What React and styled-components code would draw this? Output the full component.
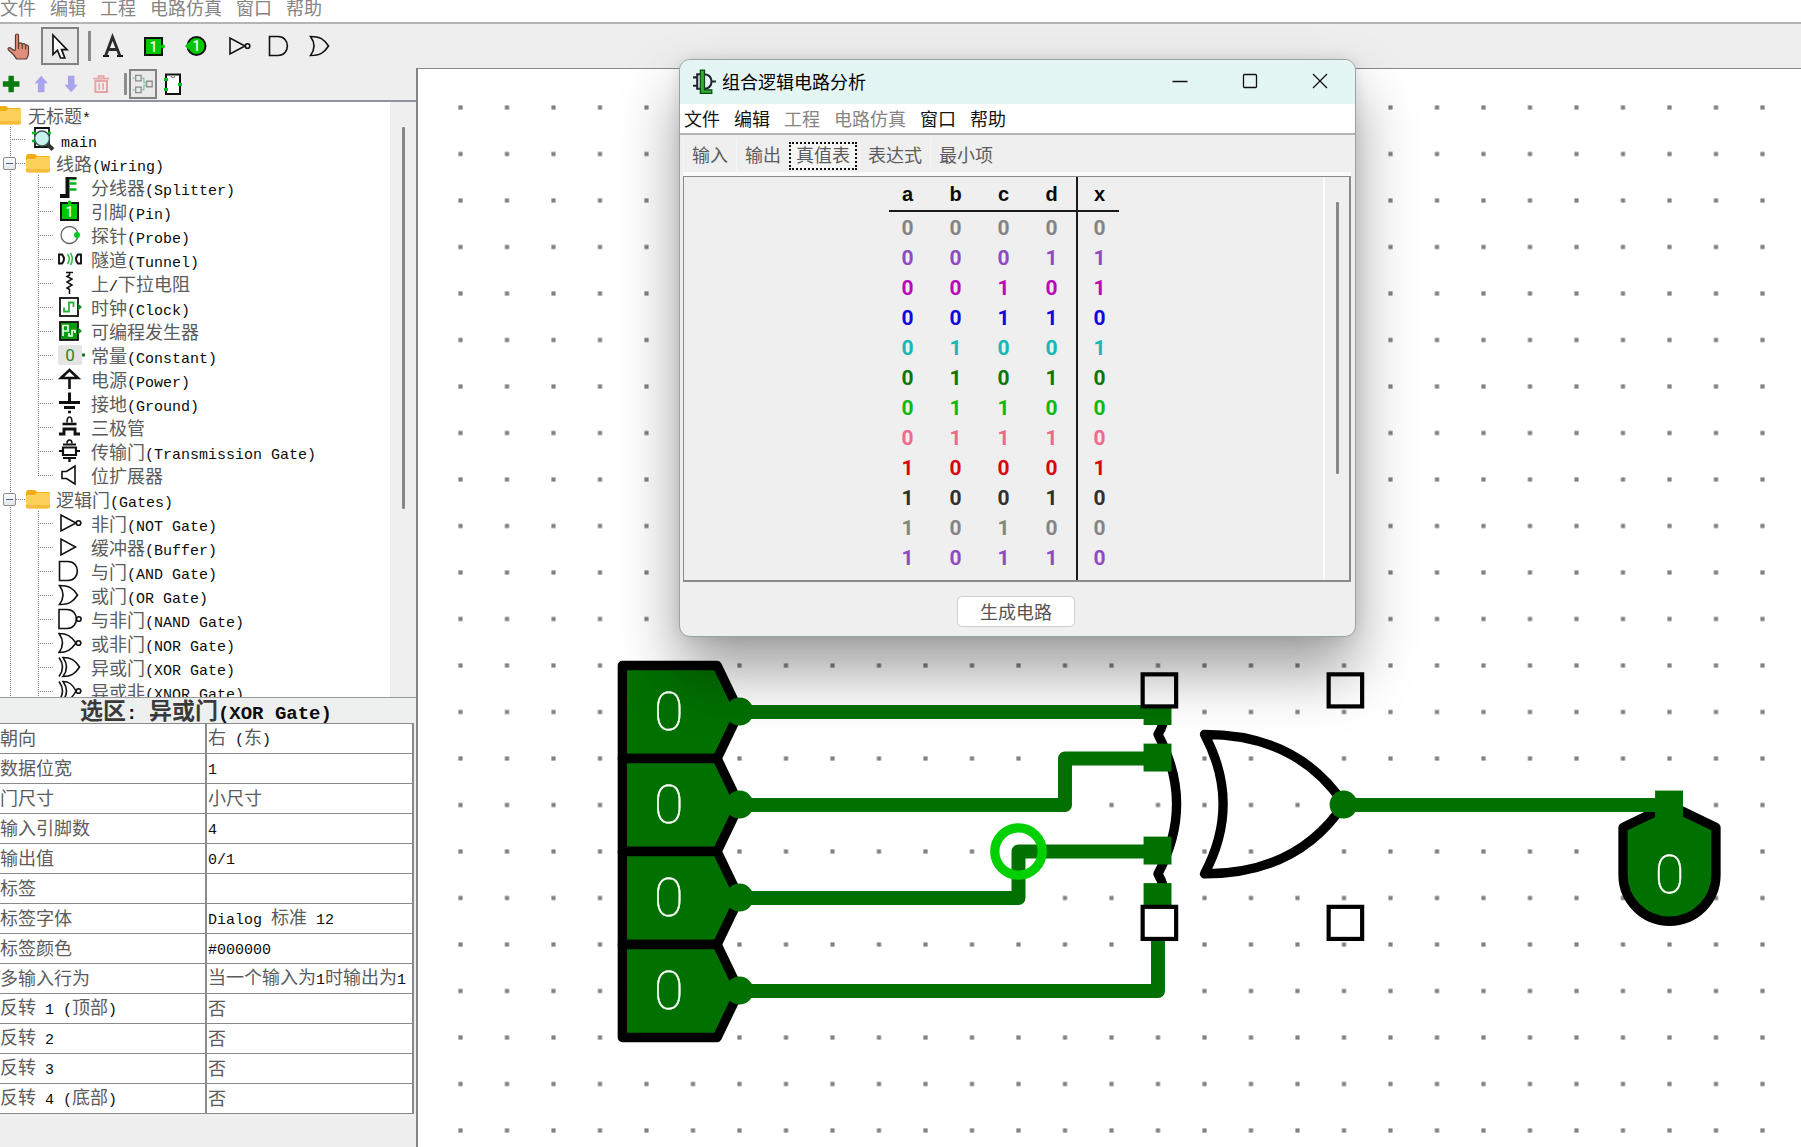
import React from "react";
import styled, { createGlobalStyle, css } from "styled-components";

const SANS = `"Noto Sans CJK SC", "Noto Sans", sans-serif`;
const MONO = `"Liberation Mono", "Noto Sans CJK SC", monospace`;

const GlobalStyle = createGlobalStyle`
  * { box-sizing: border-box; }
  html, body, #root { height: 100%; }
  body {
    margin: 0;
    overflow: hidden;
    background: #eeeeee;
    color: #5c5c5c;
    font: 18px/24px ${SANS};
  }
  button {
    padding: 0;
    border: 0;
    background: none;
    color: inherit;
    font: inherit;
  }
  svg { display: block; }
`;

/* ---------- shared parts ---------- */

const Latin = styled.span`
  font-family: ${MONO};
  font-size: ${(p) => (p.$large ? 19 : 15)}px;
  line-height: 1;
  color: #0c0c0c;
`;

function Mixed({ text, large }) {
  return text
    .split(/([\x20-\x7e]+)/)
    .filter(Boolean)
    .map((part, i) =>
      /^[\x20-\x7e]+$/.test(part) ? (
        <Latin key={i} $large={large}>{part}</Latin>
      ) : (
        <React.Fragment key={i}>{part}</React.Fragment>
      )
    );
}

const MenuBar = styled.nav`
  display: flex;
  gap: 14px;
  flex: none;
  background: #fff;
  border-bottom: 2px solid #b4b4b4;
  ${(p) =>
    p.$inDialog
      ? css`height: 31px; padding: 0 4px; line-height: 28px;`
      : css`height: 24px; padding: 0; line-height: 15px;`}
`;

const MenuItem = styled.button`
  line-height: inherit;
  height: ${(p) => (p.$tall ? 28 : 15)}px;
  white-space: nowrap;
  color: ${(p) => (p.$dark ? "#141414" : "#858585")};
`;

/* ---------- page frame ---------- */

const Page = styled.div`
  position: relative;
  display: flex;
  flex-direction: column;
  height: 100vh;
`;

const Toolbar = styled.div`
  display: flex;
  align-items: center;
  flex: none;
  gap: ${(p) => (p.$small ? 0 : 3)}px;
  height: ${(p) => (p.$small ? 34 : 44)}px;
  ${(p) => p.$small && css`border-bottom: 2px solid #8f939b;`}
`;

const ToolGroup = styled.div`
  display: flex;
  gap: ${(p) => p.$gap}px;
  margin-left: ${(p) => (p.$lead ? 3 : 0)}px;
`;

const ToolButton = styled.button`
  display: flex;
  align-items: center;
  justify-content: center;
  width: ${(p) => p.$w}px;
  height: ${(p) => p.$h}px;
  border: ${(p) => (p.$on ? "2px solid #828282" : "0")};
  background: ${(p) => (p.$on ? "#e9e9e9" : "none")};
`;

const Divider = styled.span`
  width: 3px;
  height: ${(p) => (p.$small ? 22 : 30)}px;
  margin: ${(p) => (p.$small ? "0 2px 0 10px" : "0 0 0 6px")};
  background: #8c8c8c;
`;

const Main = styled.div`
  display: flex;
  flex: 1;
  min-height: 0;
`;

const Sidebar = styled.aside`
  display: grid;
  grid-template-rows: 34px minmax(0, 595fr) minmax(0, 450fr);
  flex: none;
  width: 416px;
`;

const Canvas = styled.main`
  flex: 1;
  min-width: 0;
  background: #fff;
  border-top: 1px solid #8a8a8a;
  border-left: 2px solid #848484;
`;

/* ---------- component tree ---------- */

const TreePane = styled.div`
  display: flex;
  min-height: 0;
  overflow: hidden;
`;

const Tree = styled.ul`
  flex: 1;
  margin: 0;
  padding: 1px 0 0;
  list-style: none;
  background: #fff;
`;

const TreeRow = styled.li`
  display: flex;
  align-items: center;
  height: 24px;
  white-space: nowrap;
`;

const dots = (dir) =>
  `repeating-linear-gradient(${dir}, #808080 0 1px, transparent 1px 2px)`;

const Rail = styled.span`
  display: flex;
  align-items: center;
  flex: none;
  width: 26px;
  height: 24px;
  padding-left: 3px;
  margin-left: ${(p) => (p.$inner ? 2 : 0)}px;
  background-image: ${dots("to bottom")}, ${dots("to right")};
  background-repeat: no-repeat;
  background-position: 10px 0, 10px 12px;
  background-size: 1px ${(p) => (p.$end ? "12px" : "100%")}, ${(p) =>
    p.$dash ? "16px 1px" : "0 0"};
`;

const Toggle = styled.button`
  display: flex;
  align-items: center;
  justify-content: center;
  width: 13px;
  height: 13px;
  border: 1px solid #8d8d8d;
  border-radius: 2px;
  background: linear-gradient(#fff, #e6e6e6);
  &::before {
    content: "";
    width: 7px;
    height: 1px;
    background: #4a5fa0;
  }
`;

const IconSlot = styled.span`
  flex: none;
  margin: ${(p) =>
    p.$kind === "item" ? "0 9px 0 4px" : p.$kind === "circuit" ? "0 6px 0 5px" : "0 6px 0 0"};
`;

const RootRow = styled(TreeRow)`
  > svg { margin: 0 7px 0 -3px; }
`;

const ScrollTrack = styled.div`
  display: flex;
  flex-direction: column;
  align-items: center;
  flex: none;
  width: ${(p) => p.$w}px;
  padding-top: 25px;
  background: #efefef;
  border-left: ${(p) => (p.$edge ? "2px solid #fafafa" : "0")};
`;

const Thumb = styled.span`
  width: 3px;
  height: ${(p) => p.$size};
  border-radius: 1px;
  background: #888;
`;

/* ---------- property table ---------- */

const Properties = styled.section`
  min-height: 0;
  overflow: hidden;
`;

const PropHeading = styled.h2`
  margin: 0;
  height: 26px;
  border-top: 1px solid #9a9a9a;
  background: #eef0ef;
  text-align: center;
  font-size: 23px;
  line-height: 22px;
  font-weight: 700;
  color: #3a3a3a;
  padding-right: 4px;
`;

const PropTable = styled.table`
  width: calc(100% - 2px);
  border-collapse: collapse;
  table-layout: fixed;
  background: #fff;
`;

const PropRow = styled.tr`
  height: 30px;
`;

const propCell = css`
  padding: 0 0 3px 1px;
  border: 1px solid #8a8a8a;
  border-width: 1px 2px 1px 0;
  text-align: left;
  vertical-align: middle;
  font-weight: 400;
  line-height: 20px;
  white-space: nowrap;
`;
const PropName = styled.th`
  ${propCell}
  width: 206px;
  padding-left: 0;
`;
const PropValue = styled.td`${propCell}`;

/* ---------- analysis dialog ---------- */

const Dialog = styled.section`
  position: absolute;
  left: 679px;
  top: 59px;
  display: flex;
  flex-direction: column;
  width: 677px;
  height: 578px;
  overflow: hidden;
  border: 1px solid #9aa3a3;
  border-radius: 11px;
  background: #efefef;
  box-shadow: 0 34px 60px rgba(0, 0, 0, 0.38), 0 0 14px rgba(0, 0, 0, 0.1);
`;

const TitleBar = styled.header`
  display: flex;
  align-items: center;
  flex: none;
  height: 44px;
  padding: 0 0 2px 12px;
  background: #e4f6f4;
`;

const Title = styled.h1`
  flex: 1;
  margin: 0 0 0 5px;
  font-size: 18px;
  line-height: 24px;
  font-weight: 400;
  color: #000;
`;

const WindowButton = styled.button`
  display: flex;
  align-items: center;
  justify-content: center;
  width: 70px;
  height: 42px;
`;

const Tabs = styled.div`
  display: flex;
  flex: none;
  height: 37px;
  padding: 3px 3px 0;
`;

const Tab = styled.button`
  ${(p) =>
    p.$on
      ? css`
          height: 28px;
          margin: 4px 2px 0 0;
          padding: 0 5px 4px;
          border: 2px dotted #111;
          background: #f6f6f6;
          line-height: 20px;
        `
      : css`
          height: 33px;
          padding: 0 8px;
          border-left: 1px solid #f6f6f6;
          line-height: 33px;
        `}
`;

const ResultPane = styled.div`
  display: flex;
  flex: none;
  height: 410px;
  margin: 0 4px 0 3px;
  border-top: 4px solid #fbfbfb;
`;

const ResultFrame = styled.div`
  display: flex;
  flex: 1;
  border: 1px solid #8a8a8a;
  border-right-width: 2px;
  border-bottom-width: 2px;
`;

const Viewport = styled.div`
  display: flex;
  flex: 1;
  justify-content: center;
`;

const TableFrame = styled.div`
  position: relative;
  &::after {
    content: "";
    position: absolute;
    top: 0;
    bottom: 0;
    right: 46px;
    width: 2px;
    background: #1a1a1a;
  }
`;

const TruthTable = styled.table`
  border-collapse: collapse;
  text-align: center;
  font: 700 21px/30px Roboto, "Liberation Sans", sans-serif;
`;

const HeadRow = styled.tr`
  height: 36px;
  background: linear-gradient(#1a1a1a, #1a1a1a) center 33px / calc(100% - 10px) 2px no-repeat;
`;

const VarCell = styled.th`
  width: 48px;
  padding: 0 0 3px;
  color: #0a0a0a;
  font: 700 20px/30px "Liberation Sans", Arial, sans-serif;
`;

const ValueRow = styled.tr`
  height: 30px;
  color: ${(p) => p.$color};
`;

const Bit = styled.td`
  padding: 0;
`;

const DialogFooter = styled.footer`
  display: flex;
  align-items: center;
  justify-content: center;
  flex: 1;
  padding-right: 3px;
`;

const BuildButton = styled.button`
  width: 118px;
  height: 31px;
  margin-top: 4px;
  border: 1px solid #cfcfcf;
  border-radius: 5px;
  background: #fff;
  line-height: 28px;
  color: #555;
`;

/* ---------- icons ---------- */

const Svg = ({ size = 24, children, ...rest }) => (
  <svg width={size} height={size} viewBox="0 0 24 24" fill="none" stroke="#111" strokeWidth="1.6" aria-hidden="true" {...rest}>
    {children}
  </svg>
);

const OneGlyph = ({ x = 12, y = 17, size = 14 }) => (
  <text x={x} y={y} textAnchor="middle" fontFamily="Roboto" fontWeight="500" fontSize={size} fill="#e9ffe9" stroke="none">1</text>
);

const FolderIcon = () => (
  <Svg stroke="none">
    <path d="M0 5.5Q0 3 2 3H8.5Q10 3 11 5H22.500Q24 5 24 7V12H0Z" fill="#f2ad12" />
    <path d="M0 9.500Q0 8 1.500 8H8.500L11 6H22.500Q24 6 24 7.500V19.500Q24 21.500 22 21.500H2Q0 21.500 0 19.500Z" fill="#fdd05c" />
    <path d="M0 18V19.500Q0 21.500 2 21.500H22Q24 21.500 24 19.500V18Z" fill="#f6bd3c" />
  </Svg>
);

const HandIcon = () => (
  <Svg size={28} viewBox="0 0 28 28" stroke="#5a3a34" strokeWidth="1.2" strokeLinejoin="round">
    <path
      d="M10.500 17V3.500Q10.500 2 12 2T13.500 3.500V12Q14 10.800 15.500 10.800T17.200 12.300Q17.800 11.500 19 11.700T20.600 13.300Q21.200 12.600 22.200 13T23.500 14.500V20.500Q23.500 24 21.500 27H11.500Q10 23.500 3.500 18Q2.500 17 3.500 16T6 16.200L9 18.500Q10 18.700 10.500 17Z"
      fill="#e08f7a"
    />
    <path d="M13.500 12V17M17.200 12.500V17M20.600 13.500V17.500" />
  </Svg>
);

const ArrowIcon = () => (
  <Svg size={28} viewBox="0 0 28 28" strokeWidth="1.7">
    <path d="M7 3V22.500L11.400 18.200L14.600 26H18.800L15.600 17.600H21Z" fill="#fff" />
  </Svg>
);

const TextIcon = () => (
  <Svg size={28} viewBox="0 0 28 28">
    <path d="M4 24H10M18 24H24" strokeWidth="2" />
    <path d="M6.500 24L13.500 5L21 24M9 17.500H18.500" strokeWidth="2.800" stroke="#2b2b2b" />
  </Svg>
);

const PinInIcon = ({ size = 24 }) => (
  <Svg size={size}>
    <rect x="3" y="4" width="17" height="17" fill="#00c800" strokeWidth="2" />
    <circle cx="21" cy="12.500" r="2" fill="#00c800" stroke="none" />
    <OneGlyph x={11.500} y={17.500} />
  </Svg>
);

const TreePinIcon = () => (
  <Svg>
    <rect x="3" y="4" width="17" height="17" fill="#00c800" strokeWidth="2" />
    <circle cx="11.500" cy="3.500" r="2" fill="#00c800" stroke="none" />
    <OneGlyph x={11.500} y={17.500} />
  </Svg>
);

const PinOutIcon = () => (
  <Svg>
    <circle cx="13.500" cy="12" r="9" fill="#00c800" strokeWidth="2" />
    <path d="M2 12L6 8V16Z" fill="#00c800" stroke="none" />
    <OneGlyph x={13.500} y={17} />
  </Svg>
);

const NotIcon = () => (
  <Svg>
    <path d="M3 4V20L18 12Z" />
    <circle cx="20.500" cy="12" r="2.300" />
  </Svg>
);
const BufferIcon = () => <Svg><path d="M3 4V20L17.500 12Z" /></Svg>;
const AndIcon = () => <Svg><path d="M1.500 2.500H10C22.500 2.500 22.500 21.500 10 21.500H1.500Z" /></Svg>;
const OrIcon = () => <Svg><path d="M1.500 2.500C11 2.500 15 5 19.500 12C15 19 11 21.500 1.500 21.500Q8.500 12 1.500 2.500Z" /></Svg>;
const NandIcon = () => (
  <Svg>
    <path d="M1 2.500H9C21.500 2.500 21.500 21.500 9 21.500H1Z" />
    <circle cx="20.800" cy="12" r="2.300" />
  </Svg>
);
const NorIcon = () => (
  <Svg>
    <path d="M1 2.500C9 2.500 13 5 18 12C13 19 9 21.500 1 21.500Q8 12 1 2.500Z" />
    <circle cx="20.500" cy="12" r="2.300" />
  </Svg>
);
const XorIcon = () => (
  <Svg>
    <path d="M1 2.500Q8 12 1 21.500" />
    <path d="M5 2.500C13 2.500 17 5 21.500 12C17 19 13 21.500 5 21.500Q12 12 5 2.500Z" />
  </Svg>
);
const XnorIcon = () => (
  <Svg>
    <path d="M1 2.500Q8 12 1 21.500" />
    <path d="M5 2.500C11 2.500 14.500 5 18 12C14.500 19 11 21.500 5 21.500Q12 12 5 2.500Z" />
    <circle cx="20.500" cy="12" r="2.300" />
  </Svg>
);

const PlusIcon = () => <Svg size={20}><path d="M11 2V22M1 12H21" stroke="#0c7a12" strokeWidth="6.500" /></Svg>;
const UpIcon = () => <Svg size={20}><path d="M11 2L19 11H15V22H7V11H3Z" fill="#a9a4ec" stroke="none" /></Svg>;
const DownIcon = () => <Svg size={20}><path d="M11 22L19 13H15V2H7V13H3Z" fill="#a9a4ec" stroke="none" /></Svg>;
const TrashIcon = () => (
  <Svg size={20} stroke="#eaa3a3" strokeWidth="2">
    <path d="M1.500 5.500H20.500M8 5V2.500H14V5" />
    <path d="M4 8.500H18V21.500H4Z" strokeWidth="2.400" />
    <path d="M8.700 11V19M13.300 11V19" />
  </Svg>
);
const LayoutIcon = () => (
  <Svg size={22} stroke="#8c8c8c" strokeWidth="1.400">
    <path d="M4 2.500H10V8.500H4ZM4 15.500H10V21.500H4ZM16 9H22V15H16Z" />
    <path d="M10 5.500H13V10.500H16M10 18.500H13V13.500H16M1 5.500H4M1 18.500H4" stroke="#7fc49f" />
  </Svg>
);
const ChipIcon = () => (
  <Svg strokeWidth="2">
    <path d="M5 2.500H19V22H5Z" fill="#fff" />
    <path d="M9.500 3Q12 8.500 14.500 3" stroke="#888" strokeWidth="1.200" />
    <path d="M3 7.500H7M3 17.500H7M17 12.500H21" stroke="#00c020" strokeWidth="3" />
  </Svg>
);
const CircuitIcon = () => (
  <Svg>
    <path d="M4 1H18V20H4Z" strokeWidth="1.800" />
    <path d="M1 6H5M1 14H5M17 6H20" stroke="#00c020" strokeWidth="2.500" />
    <path d="M16 17L22 22.500" stroke="#333" strokeWidth="4" />
    <circle cx="11" cy="11.500" r="7.500" fill="#c8f2ec" stroke="#3a5a58" strokeWidth="1.500" />
  </Svg>
);
const SplitterIcon = () => (
  <Svg>
    <path d="M2 21H9.500V2" strokeWidth="4" />
    <path d="M11 8.500H18.500M11 14.500H18.500M11 4H18.500" stroke="#0fae1c" strokeWidth="2.600" />
    <path d="M11 3H18.500" strokeWidth="1.800" />
  </Svg>
);
const ProbeIcon = () => (
  <Svg>
    <circle cx="11.500" cy="12" r="8.500" stroke="#666" strokeWidth="1.300" />
    <circle cx="19" cy="12" r="3" fill="#00c820" stroke="none" />
  </Svg>
);
const TunnelIcon = () => (
  <Svg>
    <path d="M1 7.500H4Q8 12 4 16.500H1ZM23 7.500H20Q16 12 20 16.500H23Z" strokeWidth="1.900" />
    <path d="M9.500 7Q13 12 9.500 17M12.500 6Q16 12 12.500 18" stroke="#23c13c" strokeWidth="1.500" />
  </Svg>
);
const ResistorIcon = () => (
  <Svg><path d="M8 1.500H15M11.500 1.500V4L9 5.500L14 8L9 11L14 14L9 17L11.500 18.500V23" strokeWidth="1.500" /></Svg>
);
const ClockIcon = () => (
  <Svg>
    <rect x="2" y="3" width="18" height="18" strokeWidth="1.800" />
    <path d="M20 8.500L24 12L20 15.500Z" fill="#0f8a1c" stroke="none" />
    <path d="M6 12.500V16.500H11V7.500H15.500V12" stroke="#28b23c" strokeWidth="1.800" />
  </Svg>
);
const GeneratorIcon = () => (
  <Svg>
    <rect x="2" y="3" width="18" height="18" fill="#0a9a14" strokeWidth="1.800" />
    <path d="M20 8.500L24 12L20 15.500Z" fill="#0f8a1c" stroke="none" />
    <path d="M5 17V6.500H10V12H5M11 14V17H14V11.500H17V14" stroke="#e4ffe4" strokeWidth="1.700" />
  </Svg>
);
const ConstantIcon = () => (
  <Svg overflow="visible">
    <rect x="0" y="2" width="24" height="20" rx="2" fill="#e4e4e4" stroke="none" />
    <text x="12" y="18" textAnchor="middle" fontFamily="Roboto" fontSize="17" fill="#1e8a28" stroke="none">0</text>
    <rect x="24" y="10.500" width="3" height="3" fill="#0f7a1c" stroke="none" />
  </Svg>
);
const PowerIcon = () => <Svg strokeWidth="2.600"><path d="M11.500 22V10M3 11L11.500 3L20 11Z" /></Svg>;
const GroundIcon = () => (
  <Svg><path d="M11.500 1.500V11M1 11.500H22" strokeWidth="3" /><path d="M6 16.500H17" strokeWidth="3" /><path d="M10 21H13" strokeWidth="2.500" /></Svg>
);
const TransistorIcon = () => (
  <Svg>
    <path d="M9 7.500Q9 2 11.500 2T14 7.500" />
    <path d="M4.500 9H18.500" strokeWidth="2.600" />
    <path d="M1 19H6V14H17V19H22" strokeWidth="2.900" />
  </Svg>
);
const TransmissionIcon = () => (
  <Svg>
    <path d="M9 4.500Q9 1 11.500 1T14 4.500" />
    <path d="M5 5.500H18M5 19H18" strokeWidth="1.800" />
    <path d="M5 8.500H18V16H5ZM1 12H5M18 12H22" strokeWidth="2.200" />
    <path d="M11.500 19V23" strokeWidth="2.400" />
  </Svg>
);
const ExtenderIcon = () => <Svg><path d="M4 8.500H8.500L17 3V21L8.500 15.500H4Z" /></Svg>;

const AppIcon = () => (
  <Svg size={25}>
    <path d="M5 5H12C21 5 21 19 12 19H5ZM1 8H5M1 16H5M19 12H23" strokeWidth="2" stroke="#223" />
    <path d="M8 1H12V20H19V23.500H8Z" fill="#2fae2f" stroke="#0a4a10" strokeWidth="1.200" />
  </Svg>
);

const WinIcon = ({ d }) => (
  <svg width="16" height="16" viewBox="0 0 16 16" fill="none" stroke="#111" strokeWidth="1.300" aria-hidden="true">
    <path d={d} />
  </svg>
);

/* ---------- data ---------- */

const MENUS = ["文件", "编辑", "工程", "电路仿真", "窗口", "帮助"];
const DISABLED_IN_DIALOG = ["工程", "电路仿真"];

const TREE = [
  {
    name: "线路(Wiring)",
    items: [
      ["分线器(Splitter)", SplitterIcon],
      ["引脚(Pin)", TreePinIcon],
      ["探针(Probe)", ProbeIcon],
      ["隧道(Tunnel)", TunnelIcon],
      ["上/下拉电阻", ResistorIcon],
      ["时钟(Clock)", ClockIcon],
      ["可编程发生器", GeneratorIcon],
      ["常量(Constant)", ConstantIcon],
      ["电源(Power)", PowerIcon],
      ["接地(Ground)", GroundIcon],
      ["三极管", TransistorIcon],
      ["传输门(Transmission Gate)", TransmissionIcon],
      ["位扩展器", ExtenderIcon],
    ],
    closed: true,
  },
  {
    name: "逻辑门(Gates)",
    items: [
      ["非门(NOT Gate)", NotIcon],
      ["缓冲器(Buffer)", BufferIcon],
      ["与门(AND Gate)", AndIcon],
      ["或门(OR Gate)", OrIcon],
      ["与非门(NAND Gate)", NandIcon],
      ["或非门(NOR Gate)", NorIcon],
      ["异或门(XOR Gate)", XorIcon],
      ["异或非(XNOR Gate)", XnorIcon],
    ],
  },
];

const PROPS = [
  ["朝向", "右 (东)"],
  ["数据位宽", "1"],
  ["门尺寸", "小尺寸"],
  ["输入引脚数", "4"],
  ["输出值", "0/1"],
  ["标签", ""],
  ["标签字体", "Dialog 标准 12"],
  ["标签颜色", "#000000"],
  ["多输入行为", "当一个输入为1时输出为1"],
  ["反转 1 (顶部)", "否"],
  ["反转 2", "否"],
  ["反转 3", "否"],
  ["反转 4 (底部)", "否"],
];

const TABS = ["输入", "输出", "真值表", "表达式", "最小项"];
const ACTIVE_TAB = "真值表";

const ROW_COLORS = [
  "#858585", "#8d4cc0", "#b80ab8", "#1206dc", "#14b8b8",
  "#0c780c", "#12b812", "#ee6a8c", "#d60812", "#303030",
];
const OUTPUTS = [0, 1, 1, 0, 1, 0, 0, 0, 1, 0, 0, 0];

/* ---------- circuit drawing: one grid cell is 10 units ---------- */

const WIRE = "#007000";

const CircuitSvg = styled.svg`
  width: 100%;
  height: 100%;
`;

const PinDigit = ({ x, y }) => (
  <text x={x} y={y + 4.1} textAnchor="middle" fontFamily="Roboto, sans-serif" fontWeight="100" fontSize="11.600" fill="#fff" stroke="#fff" strokeWidth="0.100">0</text>
);

function Circuit() {
  return (
    <CircuitSvg role="img" aria-label="XOR Gate">
      <g transform="translate(42.500 38.500) scale(4.650)">
        <defs>
          <pattern id="grid" x="-5" y="-5" width="10" height="10" patternUnits="userSpaceOnUse">
            <rect x="4.550" y="4.550" width="0.900" height="0.900" fill="#808080" />
          </pattern>
        </defs>
        <rect x="-9" y="-5" width="600" height="400" fill="url(#grid)" />

        <g fill={WIRE} stroke="#000" strokeWidth="2" strokeLinejoin="round">
          {[130, 150, 170, 190].map((y) => (
            <path key={y} d={`M34.800 ${y - 10}H55.200L60 ${y}L55.200 ${y + 10}H34.800Z`} />
          ))}
        </g>
        {[130, 150, 170, 190].map((y) => <PinDigit key={y} x={44.800} y={y - 0.300} />)}

        <g fill="none" stroke="#000" strokeWidth="2" strokeLinejoin="round" strokeLinecap="round">
          <path d="M190 149.800Q180 134.800 160 134.800Q168 149.800 160 164.800Q180 164.800 190 149.800Z" />
          <path d="M150 125Q153 130 150 134.800Q158 149.800 150 164.800Q153 170 150 175" />
        </g>

        <path d="M260 150L270 154.800V165A10 10 0 0 1 250 165V154.800Z" fill={WIRE} stroke="#000" strokeWidth="2" strokeLinejoin="round" />
        <PinDigit x={260} y={164.800} />

        <g fill="none" stroke={WIRE} strokeWidth="3" strokeLinejoin="round" strokeLinecap="round">
          <path d="M60 130H150" />
          <path d="M60 150H130V140H150" />
          <path d="M60 170H120V160H150" />
          <path d="M60 190H150V170" />
          <path d="M190 150H260" />
        </g>
        <g fill={WIRE}>
          {[130, 150, 170, 190].map((y) => <circle key={y} cx="60" cy={y - 0.100} r="3" />)}
          <circle cx="189.900" cy="149.900" r="3" />
          {[130, 140, 160, 170].map((y) => <rect key={y} x="146.900" y={y - 3.200} width="6" height="6" />)}
          <rect x="256.900" y="146.900" width="6" height="6" />
        </g>
        <circle cx="120" cy="160" r="5.100" fill="none" stroke="#00d000" strokeWidth="2" />
        <g fill="#fff" stroke="#000" strokeWidth="0.900">
          {[150.300, 190.300].map((x) =>
            [125.300, 175.300].map((y) => <rect key={`${x}-${y}`} x={x - 3.600} y={y - 3.400} width="7.200" height="6.900" />)
          )}
        </g>
      </g>
    </CircuitSvg>
  );
}

/* ---------- sections ---------- */

const PIN_TOOLS = [["文字", TextIcon], ["输入引脚", PinInIcon], ["输出引脚", PinOutIcon]];
const GATE_TOOLS = [["非门", NotIcon], ["与门", AndIcon], ["或门", OrIcon]];
const EDIT_TOOLS = [["添加", PlusIcon], ["上移", UpIcon], ["下移", DownIcon], ["删除", TrashIcon]];

function ComponentTree() {
  return (
    <TreePane>
      <Tree>
        <RootRow><FolderIcon /><span><Mixed text="无标题*" /></span></RootRow>
        <TreeRow>
          <Rail $dash />
          <IconSlot $kind="circuit"><CircuitIcon /></IconSlot>
          <span><Mixed text="main" /></span>
        </TreeRow>
        {TREE.map((group) => (
          <React.Fragment key={group.name}>
            <TreeRow>
              <Rail $dash><Toggle type="button" aria-label={group.name} aria-expanded="true" /></Rail>
              <IconSlot><FolderIcon /></IconSlot>
              <span><Mixed text={group.name} /></span>
            </TreeRow>
            {group.items.map(([name, Icon], i) => (
              <TreeRow key={name}>
                <Rail />
                <Rail $inner $dash $end={group.closed && i === group.items.length - 1} />
                <IconSlot $kind="item"><Icon /></IconSlot>
                <span><Mixed text={name} /></span>
              </TreeRow>
            ))}
          </React.Fragment>
        ))}
      </Tree>
      <ScrollTrack $w={26}><Thumb $size="67%" /></ScrollTrack>
    </TreePane>
  );
}

function AnalysisDialog() {
  return (
    <Dialog role="dialog" aria-labelledby="analysis-title">
      <TitleBar>
        <AppIcon />
        <Title id="analysis-title">组合逻辑电路分析</Title>
        <WindowButton type="button" aria-label="最小化"><WinIcon d="M0.500 8.500H15.500" /></WindowButton>
        <WindowButton type="button" aria-label="最大化"><WinIcon d="M2.500 1.500H13.500Q14.500 1.500 14.500 2.500V13.500Q14.500 14.500 13.500 14.500H2.500Q1.500 14.500 1.500 13.500V2.500Q1.500 1.500 2.500 1.500Z" /></WindowButton>
        <WindowButton type="button" aria-label="关闭"><WinIcon d="M1 1L15 15M15 1L1 15" /></WindowButton>
      </TitleBar>
      <MenuBar $inDialog>
        {MENUS.map((m) => (
          <MenuItem key={m} type="button" $tall $dark={!DISABLED_IN_DIALOG.includes(m)}>{m}</MenuItem>
        ))}
      </MenuBar>
      <Tabs role="tablist">
        {TABS.map((t) => (
          <Tab key={t} type="button" role="tab" aria-selected={t === ACTIVE_TAB} $on={t === ACTIVE_TAB}>{t}</Tab>
        ))}
      </Tabs>
      <ResultPane role="tabpanel">
        <ResultFrame>
          <Viewport>
            <TableFrame>
              <TruthTable>
                <thead>
                  <HeadRow>{["a", "b", "c", "d", "x"].map((v) => <VarCell key={v} scope="col">{v}</VarCell>)}</HeadRow>
                </thead>
                <tbody>
                  {OUTPUTS.map((out, n) => (
                    <ValueRow key={n} $color={ROW_COLORS[n % ROW_COLORS.length]}>
                      {[8, 4, 2, 1].map((bit) => <Bit key={bit}>{n & bit ? 1 : 0}</Bit>)}
                      <Bit>{out}</Bit>
                    </ValueRow>
                  ))}
                </tbody>
              </TruthTable>
            </TableFrame>
          </Viewport>
          <ScrollTrack $w={26} $edge><Thumb $size="72%" /></ScrollTrack>
        </ResultFrame>
      </ResultPane>
      <DialogFooter><BuildButton type="button">生成电路</BuildButton></DialogFooter>
    </Dialog>
  );
}

export default function App() {
  return (
    <Page>
      <GlobalStyle />
      <MenuBar>
        {MENUS.map((m) => <MenuItem key={m} type="button">{m}</MenuItem>)}
      </MenuBar>
      <Toolbar role="toolbar">
        <ToolButton type="button" aria-label="戳工具" $w={38} $h={38}><HandIcon /></ToolButton>
        <ToolButton type="button" aria-label="选择工具" aria-pressed="true" $w={38} $h={38} $on><ArrowIcon /></ToolButton>
        <Divider />
        {[PIN_TOOLS, GATE_TOOLS].map((tools, g) => (
          <ToolGroup key={g} $gap={3} $lead={g > 0}>
            {tools.map(([label, Icon]) => (
              <ToolButton key={label} type="button" aria-label={label} $w={38} $h={38}><Icon /></ToolButton>
            ))}
          </ToolGroup>
        ))}
      </Toolbar>
      <Main>
        <Sidebar>
          <Toolbar role="toolbar" $small>
            <ToolGroup $gap={6}>
              {EDIT_TOOLS.map(([label, Icon]) => (
                <ToolButton key={label} type="button" aria-label={label} $w={24} $h={28}><Icon /></ToolButton>
              ))}
            </ToolGroup>
            <Divider $small />
            <ToolGroup $gap={2}>
              <ToolButton type="button" aria-label="电路布局" aria-pressed="true" $w={28} $h={30} $on><LayoutIcon /></ToolButton>
              <ToolButton type="button" aria-label="电路外观" $w={28} $h={30}><ChipIcon /></ToolButton>
            </ToolGroup>
          </Toolbar>
          <ComponentTree />
          <Properties>
            <PropHeading><Mixed text="选区: 异或门(XOR Gate)" large /></PropHeading>
            <PropTable>
              <tbody>
                {PROPS.map(([name, value]) => (
                  <PropRow key={name}>
                    <PropName scope="row"><Mixed text={name} /></PropName>
                    <PropValue><Mixed text={value} /></PropValue>
                  </PropRow>
                ))}
              </tbody>
            </PropTable>
          </Properties>
        </Sidebar>
        <Canvas><Circuit /></Canvas>
      </Main>
      <AnalysisDialog />
    </Page>
  );
}
